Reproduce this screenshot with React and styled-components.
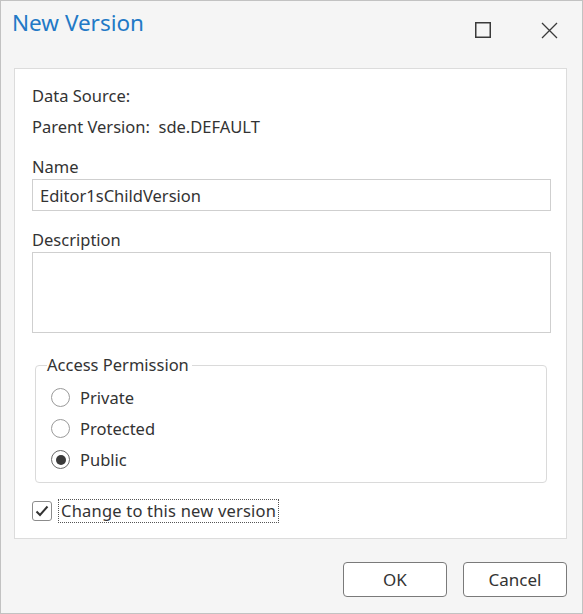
import React, { useState } from 'react';
import styled, { createGlobalStyle } from 'styled-components';

const GlobalStyle = createGlobalStyle`
    html, body {
        margin: 0;
        padding: 0;
        background: #ffffff;
    }
    * {
        box-sizing: border-box;
    }
`;

const Window = styled.div`
    width: 583px;
    height: 614px;
    background: #f5f5f5;
    border: 1px solid #c2c2c2;
    display: flex;
    flex-direction: column;
    font-family: 'Noto Sans', 'Open Sans', sans-serif;
    font-size: 16.5px;
    color: #333333;
`;

const TitleBar = styled.div`
    height: 67px;
    display: flex;
    align-items: flex-start;
    padding: 6px 0 0 11px;
`;

const Title = styled.h1`
    margin: 0;
    flex: 1;
    font-size: 22.5px;
    font-weight: 400;
    line-height: 32px;
    color: #2279c6;
`;

const TitleButton = styled.button`
    width: 58px;
    height: 34px;
    border: 0;
    background: transparent;
    padding: 0;
    margin-top: 6px;
    margin-right: ${(p) => p.edge || 0}px;
    display: flex;
    align-items: center;
    justify-content: center;
    color: #3a3a3a;
`;

const Panel = styled.div`
    margin: 0 15px 0 13px;
    height: 471px;
    background: #ffffff;
    border: 1px solid #dcdcdc;
    padding: 17px 14px 0 17px;
    display: flex;
    flex-direction: column;
`;

const InfoLine = styled.div`
    line-height: 20px;
    margin-bottom: ${(p) => p.gap || 0}px;
    white-space: pre;
`;

const FieldLabel = styled.label`
    display: block;
    line-height: 20px;
    margin-top: ${(p) => p.top || 0}px;
`;

const TextBox = styled.input`
    width: 519px;
    height: 32px;
    margin: 2px 0 0;
    border: 1px solid #cfcfcf;
    padding: 0 7px;
    font: inherit;
    color: #333333;
    outline: none;
`;

const TextArea = styled.textarea`
    width: 519px;
    height: 81px;
    margin: 2px 0 0;
    border: 1px solid #cfcfcf;
    padding: 4px 7px;
    font: inherit;
    resize: none;
    outline: none;
    display: block;
`;

const Group = styled.fieldset`
    margin: 22px 5px 0 3px;
    padding: 7px 0 9px 15px;
    border: 1px solid #dadada;
    border-radius: 4px;
    height: 128px;
`;

const Legend = styled.legend`
    margin-left: -4px;
    padding: 0 3px 0 0;
    line-height: 20px;
`;

const RadioRow = styled.label`
    display: flex;
    align-items: center;
    height: 31px;
    gap: 10px;
`;

const Radio = styled.input.attrs({ type: 'radio' })`
    appearance: none;
    margin: 0;
    width: 19px;
    height: 19px;
    border-radius: 50%;
    border: 1px solid ${(p) => (p.checked ? '#6a6a6a' : '#9a9a9a')};
    background: #ffffff;
    display: grid;
    place-items: center;

    &:checked::after {
        content: '';
        width: 10px;
        height: 10px;
        border-radius: 50%;
        background: #3a3a3a;
    }
`;

const CheckRow = styled.label`
    display: flex;
    align-items: center;
    gap: 6px;
    margin-top: 16px;
`;

const CheckBox = styled.span`
    width: 20px;
    height: 20px;
    border: 1px solid #8c8c8c;
    border-radius: 3px;
    display: flex;
    align-items: center;
    justify-content: center;
    color: #333333;
`;

const FocusText = styled.span`
    border: 1px dotted #555555;
    padding: 0 2px;
    line-height: 22px;
    letter-spacing: 0.2px;
`;

const Footer = styled.div`
    display: flex;
    justify-content: flex-end;
    gap: 16px;
    padding: 23px 15px 0 0;
`;

const DialogButton = styled.button`
    width: 104px;
    height: 35px;
    border: 1px solid #7a7a7a;
    border-radius: 4px;
    background: #ffffff;
    font: inherit;
    font-size: 17px;
    color: #333333;
    padding: 0;
`;

function App() {
    const [access, setAccess] = useState('public');
    const [change, setChange] = useState(true);
    const options = [
        { key: 'private', label: 'Private' },
        { key: 'protected', label: 'Protected' },
        { key: 'public', label: 'Public' },
    ];

    return (
        <>
            <GlobalStyle />
            <Window>
                <TitleBar>
                    <Title>New Version</Title>
                    <TitleButton aria-label="Maximize" edge={8}>
                        <svg width="16" height="16" viewBox="0 0 16 16">
                            <rect x="0.75" y="0.75" width="14.5" height="14.5" fill="none" stroke="currentColor" strokeWidth="1.5" />
                        </svg>
                    </TitleButton>
                    <TitleButton aria-label="Close" edge={4}>
                        <svg width="17" height="17" viewBox="0 0 17 17">
                            <path d="M1 1 L16 16 M16 1 L1 16" stroke="currentColor" strokeWidth="1.3" />
                        </svg>
                    </TitleButton>
                </TitleBar>

                <Panel>
                    <InfoLine gap={11}>Data Source:</InfoLine>
                    <InfoLine gap={20}>{'Parent Version:  sde.DEFAULT'}</InfoLine>

                    <FieldLabel htmlFor="name">Name</FieldLabel>
                    <TextBox id="name" defaultValue="Editor1sChildVersion" />

                    <FieldLabel htmlFor="desc" top={19}>
                        Description
                    </FieldLabel>
                    <TextArea id="desc" />

                    <Group>
                        <Legend>Access Permission</Legend>
                        {options.map((o) => (
                            <RadioRow key={o.key}>
                                <Radio
                                    name="access"
                                    checked={access === o.key}
                                    onChange={() => setAccess(o.key)}
                                />
                                {o.label}
                            </RadioRow>
                        ))}
                    </Group>

                    <CheckRow onClick={() => setChange(!change)}>
                        <CheckBox>
                            {change && (
                                <svg width="14" height="12" viewBox="0 0 14 12">
                                    <path d="M1.5 6.5 L5 10 L12.5 1.5" fill="none" stroke="currentColor" strokeWidth="2" />
                                </svg>
                            )}
                        </CheckBox>
                        <FocusText>Change to this new version</FocusText>
                    </CheckRow>
                </Panel>

                <Footer>
                    <DialogButton>OK</DialogButton>
                    <DialogButton>Cancel</DialogButton>
                </Footer>
            </Window>
        </>
    );
}

export default App;
